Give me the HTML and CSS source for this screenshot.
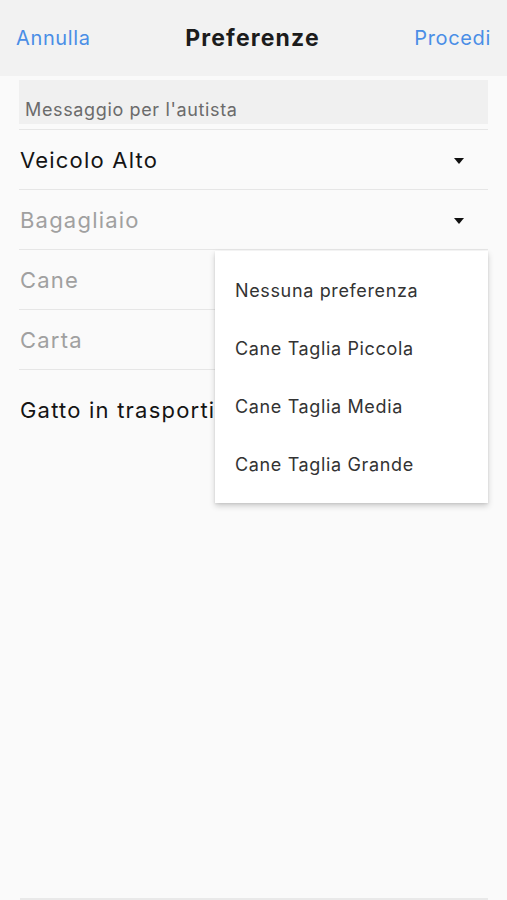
FILE: index.html
```html
<!DOCTYPE html>
<html lang="it">
<head>
    <meta charset="UTF-8">
    <meta name="viewport" content="width=device-width, initial-scale=1.0">
    <title>Preferenze</title>
    <link rel="stylesheet" href="styles.css">
</head>
<body>
    <div class="screen">
        <header class="nav-bar">
            <span class="nav-btn">Annulla</span>
            <span class="nav-title">Preferenze</span>
            <span class="nav-btn">Procedi</span>
        </header>

        <main class="form">
            <div class="message-field">
                <div class="message-box">Messaggio per l'autista</div>
            </div>

            <div class="row">
                <span class="row-label">Veicolo Alto</span>
                <span class="caret"></span>
            </div>
            <div class="row">
                <span class="row-label placeholder">Bagagliaio</span>
                <span class="caret"></span>
            </div>
            <div class="row">
                <span class="row-label placeholder">Cane</span>
            </div>
            <div class="row">
                <span class="row-label placeholder">Carta</span>
            </div>
            <div class="row last-row">
                <span class="row-label">Gatto in trasportino</span>
            </div>

            <ul class="dropdown">
                <li class="dropdown-item">Nessuna preferenza</li>
                <li class="dropdown-item">Cane Taglia Piccola</li>
                <li class="dropdown-item">Cane Taglia Media</li>
                <li class="dropdown-item">Cane Taglia Grande</li>
            </ul>
        </main>

        <footer class="bottom-line"></footer>
    </div>
</body>
</html>
```

FILE: styles.css
```css
* {
    box-sizing: border-box;
}

body {
    margin: 0;
    background: #fafafa;
    font-family: Inter, "Liberation Sans", Arial, sans-serif;
    letter-spacing: 0.04em;
    color: #1a1a1a;
}

.screen {
    display: flex;
    flex-direction: column;
    height: 900px;
    overflow: hidden;
}

.nav-bar {
    display: flex;
    align-items: center;
    justify-content: space-between;
    height: 76px;
    padding: 0 16px 0 16px;
    background: #f2f2f2;
}

.nav-btn {
    font-size: 20px;
    color: #4a8ee6;
}

.nav-title {
    font-size: 23px;
    font-weight: 700;
    letter-spacing: 0.05em;
    color: #1c1c1c;
}

.form {
    position: relative;
    flex: 1;
    padding: 4px 19px 0 19px;
}

.message-field {
    padding-bottom: 5px;
    border-bottom: 1px solid #e6e6e6;
}

.message-box {
    height: 44px;
    padding: 19px 0 0 6px;
    background: #f0f0f0;
    font-size: 18px;
    line-height: 22px;
    color: #6b6b6b;
}

.row {
    display: flex;
    align-items: center;
    justify-content: space-between;
    height: 60px;
    padding: 0 1px;
    border-bottom: 1px solid #e6e6e6;
}

.last-row {
    height: 70px;
    padding-top: 10px;
    border-bottom: none;
}

.row-label {
    font-size: 22px;
    letter-spacing: 0.055em;
    color: #141414;
}

.row-label.placeholder {
    color: #a0a0a0;
}

.caret {
    width: 0;
    height: 0;
    margin: 2px 23px 0 0;
    border-left: 5px solid transparent;
    border-right: 5px solid transparent;
    border-top: 6px solid #111;
}

.dropdown {
    position: absolute;
    top: 175px;
    right: 19px;
    width: 273px;
    margin: 0;
    padding: 10px 0;
    list-style: none;
    background: #ffffff;
    box-shadow: 0 3px 6px rgba(0, 0, 0, 0.18), 0 1px 2px rgba(0, 0, 0, 0.08);
}

.dropdown-item {
    display: flex;
    align-items: center;
    height: 58px;
    padding-left: 20px;
    font-size: 18px;
    color: #333;
}

.bottom-line {
    height: 2px;
    margin: 0 19px 0 20px;
    background: #e9e9e9;
}
```
